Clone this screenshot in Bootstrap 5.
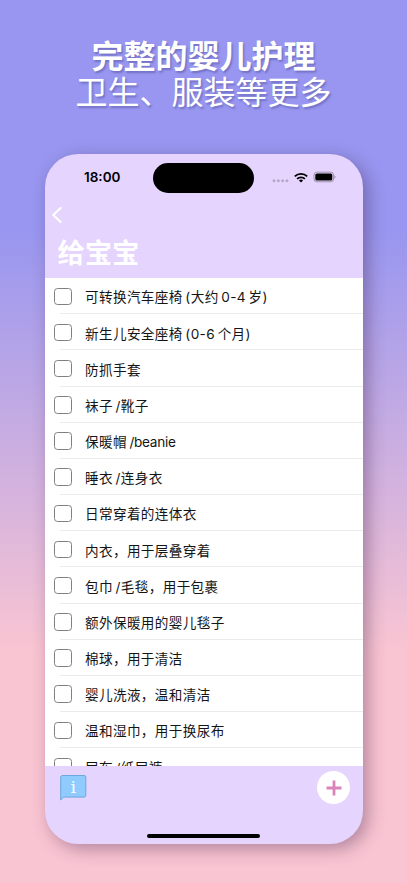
<!DOCTYPE html>
<html lang="zh-CN">
<head>
<meta charset="utf-8">
<meta name="viewport" content="width=device-width, initial-scale=1">
<title>给宝宝</title>
<link href="https://cdn.jsdelivr.net/npm/bootstrap@5.3.0/dist/css/bootstrap.min.css" rel="stylesheet">
<style>
  body {
    height: 883px;
    overflow: hidden;
    font-family: Inter, "Noto Sans CJK SC", sans-serif;
    background: linear-gradient(180deg, #9896f0 0, #9896f0 26%, #fac5d2 74%, #fac5d2 100%);
  }
  .headline {
    height: 154px;
    padding-top: 36px;
    font: 32px/36px "Noto Sans CJK SC", sans-serif;
    text-shadow: 1.5px 1.5px 2px rgba(60, 60, 130, .4);
  }
  .headline-sub { font-weight: 400; }
  .phone {
    width: 317.5px;
    height: 690px;
    margin-left: 45px;
    border-radius: 33px;
    background: #e5d4fe;
    box-shadow: 5px 5px 17px rgba(60, 30, 70, .38);
  }
  .statusbar { height: 47px; padding: 9px 27px 0 39px; }
  .clock { width: 69px; font-size: 13.5px; font-weight: 600; line-height: 29px; }
  .island { width: 101px; height: 30px; border-radius: 15px; }
  .indicators { height: 28px; gap: 5px; }
  .screen-title { height: 77px; padding: 5px 0 0 7px; }
  .screen-title h2 { margin: 7px 0 0 5.5px; font: 700 27.3px/42px "Noto Sans CJK SC", sans-serif; }
  .checklist { height: 488px; }
  .item { height: 36.18px; padding: .5px 0 0 9px; }
  .box { width: 17.5px; height: 17.5px; border: 1px solid #808084; border-radius: 3.5px; margin-right: 13.5px; }
  .item-text { color: #151515; font-size: 13.6px; letter-spacing: .37px; word-spacing: -1.6px; line-height: 34px; padding-top: 2px; white-space: pre; }
  .latin { letter-spacing: -.3px; }
  .divider { height: 1px; margin-left: 15px; background: #ebebed; margin-top: -1px; }
  .toolbar { height: 78px; padding: 5px 12.5px 0 14px; }
  .add { width: 33px; height: 33px; }
  .home-bar { left: 102px; bottom: 6px; width: 113px; height: 4px; }
</style>
</head>
<body>
<header class="headline text-white text-center">
  <div class="fw-bold">完整的婴儿护理</div>
  <div class="headline-sub">卫生、服装等更多</div>
</header>
<main class="phone position-relative overflow-hidden d-flex flex-column">
  <div class="statusbar d-flex flex-shrink-0">
    <div class="clock text-black">18:00</div>
    <div class="island bg-black"></div>
    <div class="indicators d-flex align-items-center ms-auto">
      <svg width="17" height="14" viewBox="0 0 17 14" fill="#b7a8cc"><circle cx="2" cy="10.8" r="1.5"/><circle cx="6.3" cy="10.8" r="1.5"/><circle cx="10.6" cy="10.8" r="1.5"/><circle cx="14.9" cy="10.8" r="1.5"/></svg>
      <svg width="14" height="11" viewBox="0 0 14 11" fill="none" stroke="#000" stroke-width="1.8"><path d="M.8 4.3a8.9 8.9 0 0 1 12.4 0M3.1 6.9a5.5 5.5 0 0 1 7.8 0"/><path d="M4.9 8.5a3.1 3.1 0 0 1 4.2 0L7 10.6z" fill="#000" stroke="none"/></svg>
      <svg width="23" height="12" viewBox="0 0 23 12"><rect x="1" y="1.2" width="19.6" height="9.6" rx="2.8" fill="none" stroke="#9e92ae"/><rect x="2.3" y="2.5" width="17" height="7" rx="1.6"/><path d="M21.5 4.3c1.3.5 1.3 2.9 0 3.4z" fill="#8d819e"/></svg>
    </div>
  </div>
  <div class="screen-title flex-shrink-0 text-white">
    <svg class="d-block" width="11" height="17" viewBox="0 0 11 17" fill="none" stroke="#fff" stroke-width="2.1" stroke-linecap="round" stroke-linejoin="round"><path d="M8.6 2 1.3 9l7.3 6.9"/></svg>
    <h2>给宝宝</h2>
  </div>
  <div class="checklist bg-white overflow-hidden flex-shrink-0" id="list"></div>
  <div class="toolbar d-flex justify-content-between flex-shrink-0">
    <svg width="28" height="30" viewBox="0 0 28 30"><path d="M3.3 4.5H25a1.8 1.8 0 0 1 1.8 1.8v18a1.8 1.8 0 0 1-1.8 1.8H4.7l-3 2.8V6.1c0-1 .6-1.6 1.6-1.6z" fill="#8fcbfc" stroke="#6ea6df"/><text x="14.2" y="21.8" fill="#fff" font-family="DejaVu Serif, serif" font-size="17.5" text-anchor="middle">i</text></svg>
    <div class="add rounded-circle bg-white d-flex align-items-center justify-content-center">
      <svg width="16" height="16" viewBox="0 0 16 16" stroke="#dc83b9" stroke-width="2.8"><path d="M.5 8h15M8 .5v15"/></svg>
    </div>
  </div>
  <div class="home-bar position-absolute bg-black rounded-pill"></div>
</main>
<script>
  const items = ['可转换汽车座椅 (大约 0-4 岁)', '新生儿安全座椅 (0-6 个月)', '防抓手套', '袜子 /靴子', '保暖帽 <span class="latin">/beanie</span>', '睡衣 /连身衣', '日常穿着的连体衣', '内衣，用于层叠穿着', '包巾 /毛毯，用于包裹', '额外保暖用的婴儿毯子', '棉球，用于清洁', '婴儿洗液，温和清洁', '温和湿巾，用于换尿布', '尿布 /纸尿裤'];
  document.getElementById('list').innerHTML = items.map(t =>
    `<div class="item d-flex align-items-center"><span class="box flex-shrink-0"></span><span class="item-text">${t}</span></div><div class="divider"></div>`).join('');
</script>
<script src="https://cdn.jsdelivr.net/npm/bootstrap@5.3.0/dist/js/bootstrap.bundle.min.js"></script>
</body>
</html>
